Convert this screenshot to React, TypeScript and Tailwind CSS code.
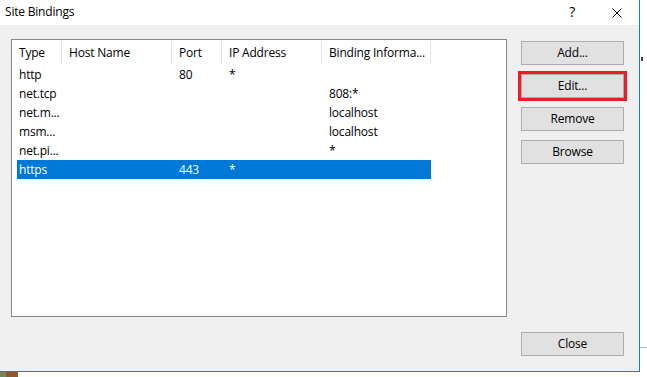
const rows = [
  { type: 'http', host: '', port: '80', ip: '*', info: '' },
  { type: 'net.tcp', host: '', port: '', ip: '', info: '808:*' },
  { type: 'net.m...', host: '', port: '', ip: '', info: 'localhost' },
  { type: 'msm...', host: '', port: '', ip: '', info: 'localhost' },
  { type: 'net.pi...', host: '', port: '', ip: '', info: '*' },
  { type: 'https', host: '', port: '443', ip: '*', info: '', selected: true },
];

const headers = [
  { label: 'Type', w: 'w-[50px]' },
  { label: 'Host Name', w: 'w-[110px]' },
  { label: 'Port', w: 'w-[50px]' },
  { label: 'IP Address', w: 'w-[100px]' },
  { label: 'Binding Informa...', w: 'w-[109px]' },
];

function DlgButton({ label, highlight }: { label: string; highlight?: boolean }) {
  return (
    <button
      className={
        'w-[103px] h-[24px] bg-[#e1e1e1] border border-[#adadad] text-black text-[12px] leading-none' +
        (highlight ? ' outline-[3px] outline-solid outline-[#ed1c24]' : '')
      }
    >
      {label}
    </button>
  );
}

export default function App() {
  return (
    <div className="w-[647px] h-[377px] bg-white overflow-hidden text-black text-[12px] tracking-[-0.2px] font-['Open_Sans',sans-serif]">
      <div className="flex">
        {/* dialog */}
        <div className="w-[640px] h-[372px] flex flex-col border-r border-b border-[#1a7bd0]">
          <div className="h-[25px] bg-white flex items-center pl-[5px]">
            <span className="flex-1 leading-none pb-[1px]">Site Bindings</span>
            <span className="text-[14px] leading-none mr-[37px] pb-[1px]">?</span>
            <svg width="10" height="10" viewBox="0 0 10 10" className="mr-[17px]">
              <path d="M0.5 0.5 L9.5 9.5 M9.5 0.5 L0.5 9.5" stroke="#000" strokeWidth="1" />
            </svg>
          </div>
          <div className="flex-1 bg-[#f0f0f0] flex pt-[14px] pl-[11px]">
            {/* list view */}
            <div className="w-[496px] h-[278px] bg-white border border-[#828790]">
              <div className="flex h-[25px] pt-[1px]">
                {headers.map((h) => (
                  <div
                    key={h.label}
                    className={`${h.w} h-[23px] border-r border-[#e5e5e5] pl-[7px] flex items-center whitespace-nowrap`}
                  >
                    {h.label}
                  </div>
                ))}
              </div>
              <div className="flex flex-col">
                {rows.map((r) => (
                  <div
                    key={r.type}
                    className={`ml-[5px] w-[414px] h-[19px] flex items-center whitespace-nowrap ${
                      r.selected ? 'bg-[#0078d7] text-white' : ''
                    }`}
                  >
                    <div className="w-[45px] pl-[2px]">{r.type}</div>
                    <div className="w-[110px] pl-[7px]">{r.host}</div>
                    <div className="w-[50px] pl-[7px]">{r.port}</div>
                    <div className="w-[100px] pl-[7px]">{r.ip}</div>
                    <div className="w-[109px] pl-[7px]">{r.info}</div>
                  </div>
                ))}
              </div>
            </div>
            {/* buttons */}
            <div className="ml-[14px] mt-[2px] flex flex-col gap-[9px] h-[315px]">
              <DlgButton label="Add..." />
              <DlgButton label="Edit..." highlight />
              <DlgButton label="Remove" />
              <DlgButton label="Browse" />
              <div className="flex-1" />
              <DlgButton label="Close" />
            </div>
          </div>
        </div>
        {/* desktop strip on the right */}
        <div className="w-[7px] h-[372px] flex flex-col">
          <div className="h-[57px]" />
          <div className="w-[2px] h-[4px] ml-[1px] bg-[#5a2a6a]" />
          <div className="h-[286px]" />
          <div className="h-[1px] bg-[#a9b8cc]" />
        </div>
      </div>
      <div className="flex h-[5px]">
        <div className="w-[6px] bg-[#6d8a5a]" />
        <div className="w-[12px] bg-[#8a5a36]" />
      </div>
    </div>
  );
}
